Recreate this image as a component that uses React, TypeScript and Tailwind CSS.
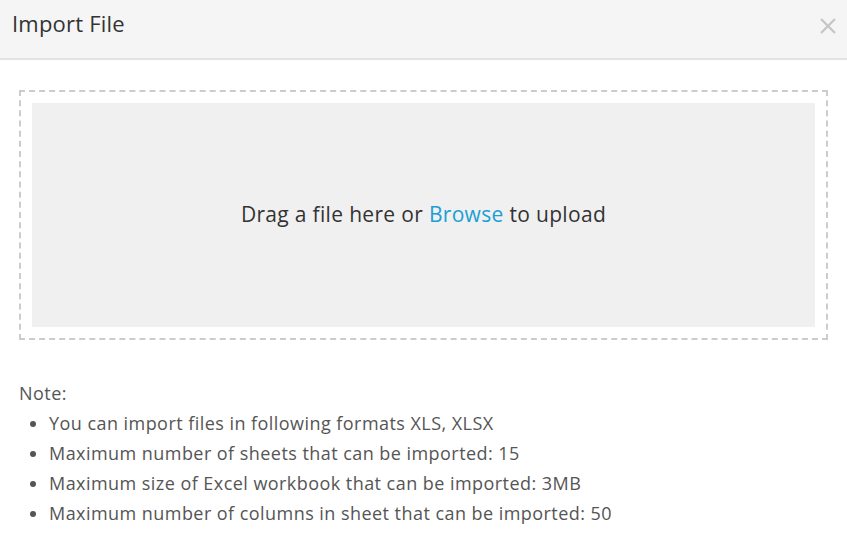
const notes = [
  'You can import files in following formats XLS, XLSX',
  'Maximum number of sheets that can be imported: 15',
  'Maximum size of Excel workbook that can be imported: 3MB',
  'Maximum number of columns in sheet that can be imported: 50',
];

export default function App() {
  return (
    <div
      className="w-[847px] h-[543px] bg-white overflow-hidden"
      style={{ fontFamily: '"Open Sans", "Noto Sans", sans-serif' }}
    >
      {/* Header */}
      <div className="h-[60px] bg-[#f5f5f5] border-b-2 border-[#e3e3e3] flex items-center justify-between pl-3 pr-[11px]">
        <h1 className="text-[22px] text-[#333] font-normal tracking-[0.2px] -mt-[12px]">Import File</h1>
        <svg viewBox="0 0 16 16" className="w-[16px] h-[16px] -mt-[6px]" fill="none" stroke="#c6c6c6" strokeWidth={2.4}>
          <path d="M1 1 L15 15 M15 1 L1 15" />
        </svg>
      </div>

      {/* Drop zone */}
      <div className="mx-[19px] mt-[30px] h-[250px] border-2 border-dashed border-[#cccccc] p-[11px]">
        <div className="h-full bg-[#f0f0f0] flex items-center justify-center">
          <p className="text-[21px] text-[#333] tracking-[0.32px]">
            Drag a file here or <span className="text-[#1a9fd6] cursor-pointer">Browse</span> to upload
          </p>
        </div>
      </div>

      {/* Notes */}
      <div className="px-[19px] mt-[38px] text-[18px] text-[#555] leading-[30px] tracking-[0.45px]">
        <div>Note:</div>
        <ul className="list-disc pl-[30px]">
          {notes.map((n) => (
            <li key={n}>{n}</li>
          ))}
        </ul>
      </div>
    </div>
  );
}
